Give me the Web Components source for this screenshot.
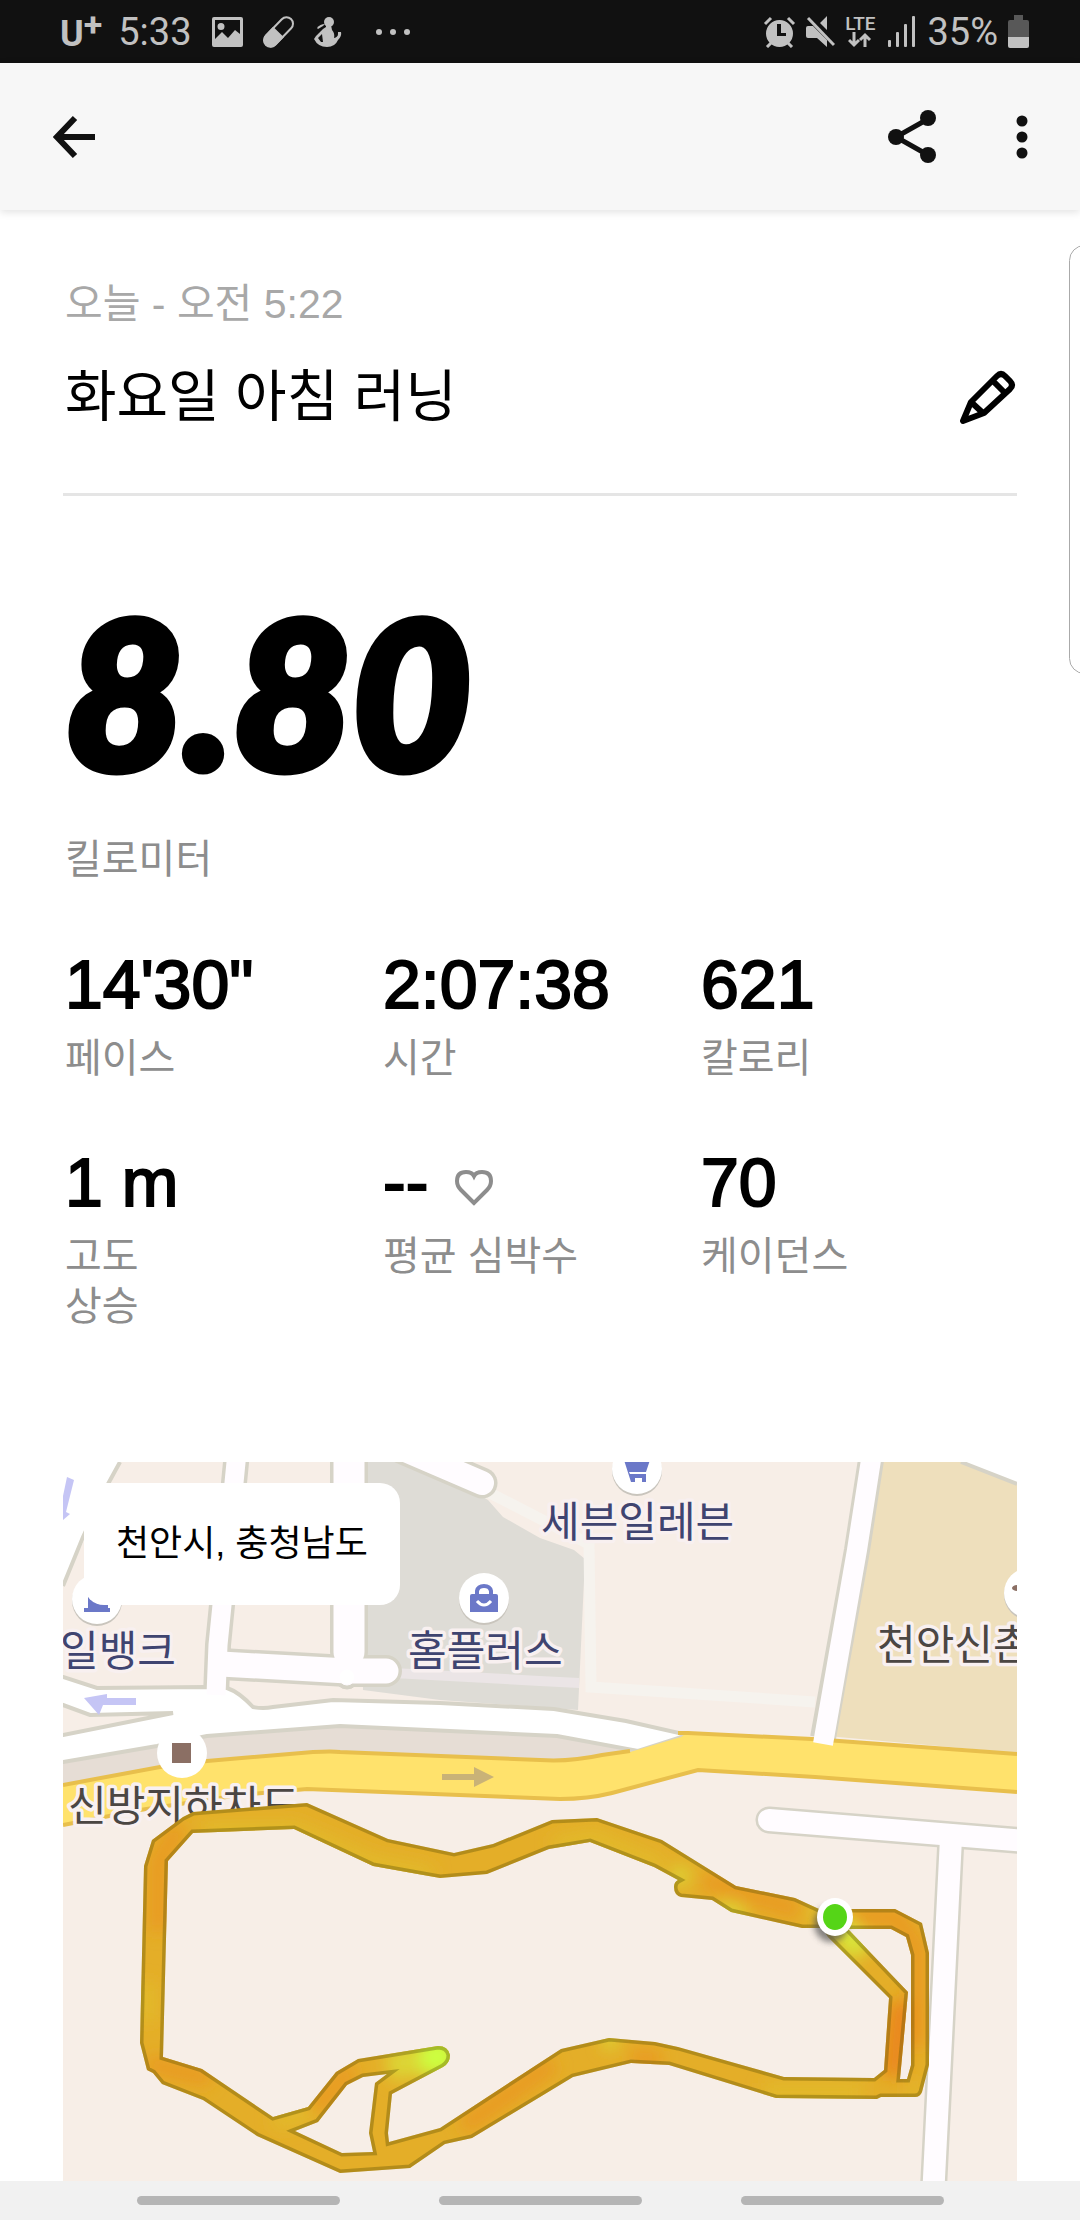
<!DOCTYPE html>
<html lang="ko">
<head>
<meta charset="utf-8">
<meta name="viewport" content="width=device-width, initial-scale=1">
<title>화요일 아침 러닝</title>
<style>
  body {
    margin: 0;
    background: #fff;
    color: #000;
    font-family: "Liberation Sans", "Noto Sans CJK KR", sans-serif;
  }
</style>
</head>
<body>
<run-page>
  <status-bar slot="top" time="5:33" battery="35%"></status-bar>
  <app-bar slot="top"></app-bar>

  <run-header date="오늘 - 오전 5:22">화요일 아침 러닝</run-header>
  <run-distance value="8.80">킬로미터</run-distance>
  <stat-grid>
    <run-stat value="14'30&quot;">페이스</run-stat>
    <run-stat value="2:07:38">시간</run-stat>
    <run-stat value="621">칼로리</run-stat>
    <run-stat value="1 m">고도<br>상승</run-stat>
    <run-stat value="--" heart>평균 심박수</run-stat>
    <run-stat value="70">케이던스</run-stat>
  </stat-grid>
  <route-map>천안시, 충청남도</route-map>

  <nav-bar slot="bottom"></nav-bar>
</run-page>

<script>
class RunPage extends HTMLElement {
    constructor(){
        super();
        this.attachShadow({mode: 'open'}).innerHTML = `
        <style>
        :host {
          display: flex;
          flex-direction: column;
          min-height: 100vh;
          position: relative;
          overflow: hidden;
        }
        main {
          flex: 1;
          padding: 0 63px;
        }
        /* edge panel that peeks in from the right */
        .edge {
          position: absolute;
          top: 245px;
          right: -20px;
          width: 29px;
          height: 427px;
          border: 1px solid #aaa;
          border-radius: 18px;
          background: #fff;
        }
        </style>
        <slot name="top"></slot>
        <main><slot></slot></main>
        <slot name="bottom"></slot>
        <div class="edge"></div>
        `;
    }
}

class StatusBar extends HTMLElement {
    constructor(){
        super();
        this.attachShadow({mode: 'open'});
    }

    connectedCallback(){
        this.shadowRoot.innerHTML = `
        <style>
        :host {
          display: flex;
          justify-content: space-between;
          height: 63px;
          padding: 0 51px 0 60px;
          background: #111;
          color: #c1c1c1;
          font: 38px/64px Roboto, sans-serif;
        }
        div {
          display: flex;
          align-items: center;
        }
        .left { gap: 20px; }
        .right { gap: 10px; }
        svg {
          display: block;
          fill: currentColor;
        }
        .carrier {
          display: flex;
          margin-right: -4px;
          padding-top: 4px;
          font: bold 36px/40px Roboto, sans-serif;
        }
        .carrier sup {
          font-size: 34px;
          line-height: 20px;
        }
        .net {
          flex-direction: column;
          font: 500 19px/16px Roboto, sans-serif;
        }
        </style>
        <div class="left">
          <span class="carrier">U<sup>+</sup></span>
          <span class="time">${this.getAttribute('time')}</span>
          <svg width="31" height="30" viewBox="0 0 31 30"><path fill-rule="evenodd" d="M2 0h27q2 0 2 2v26q0 2-2 2H2q-2 0-2-2V2q0-2 2-2zM3 3v19l7-7 6 6 7-8 5 4V3zM9 6a3.500 3.500 0 1 1 0 7 3.500 3.500 0 0 1 0-7z"/></svg>
          <svg width="31" height="32" viewBox="0 0 31 32"><g transform="rotate(44 15.500 16)"><rect x="9" y="-2" width="13" height="36" rx="6.500" fill="none" stroke="currentColor" stroke-width="2"/><path d="M8 16h15v11a7.500 7.500 0 0 1-15 0z"/></g></svg>
          <svg width="28" height="30" viewBox="0 0 28 30"><circle cx="15" cy="5" r="5"/><path d="M12 8h5l1 5q3 3 2 8 4-1 4-4v-2h3q1 4-3 8-3 7-11 7-9 0-13-8l2-3 7-7 3-2zM4 21l3 4 2 0-1-8z" fill-rule="evenodd"/><path d="M3 11q3-4 8-4l-2 2-5 3z"/></svg>
          <svg width="54" height="8" viewBox="0 0 54 8"><circle cx="17" cy="4" r="3"/><circle cx="31" cy="4" r="3"/><circle cx="45" cy="4" r="3"/></svg>
        </div>
        <div class="right">
          <svg width="33" height="32" viewBox="0 0 33 32"><path fill-rule="evenodd" d="M16.500 4a13.500 13.500 0 1 1 0 27 13.500 13.500 0 0 1 0-27zM14 8v12h9v-3h-5V8z"/><path d="M2 8l6-6M31 8l-6-6M4 31l5-5M29 31l-5-5" stroke="currentColor" stroke-width="3"/></svg>
          <svg width="29" height="32" viewBox="0 0 29 32"><path d="M21 0v14l-7-7zM2 10h5l14 14v7l-10-9H2q-2 0-2-2v-8q0-2 2-2z"/><path d="M2 2l26 27" stroke="currentColor" stroke-width="3"/></svg>
          <div class="net">LTE
            <svg width="24" height="16" viewBox="0 0 24 16" fill="none" stroke="currentColor" stroke-width="3"><path fill="none" d="M6 0v13M1 8l5 5 5-5M17 15V3M12 8l5-5 5 5"/></svg>
          </div>
          <svg width="32" height="32" viewBox="0 0 32 32"><rect x="3" y="24" width="3" height="7" rx="1"/><rect x="11" y="16" width="3" height="15" rx="1"/><rect x="19" y="8" width="3" height="23" rx="1"/><rect x="27" y="0" width="3" height="31" rx="1"/></svg>
          <span>${this.getAttribute('battery')}</span>
          <svg width="21" height="33" viewBox="0 0 21 33"><path fill="#585858" d="M6 0h9v5h4q2 0 2 2v15H0V7q0-2 2-2h4z"/><path d="M0 22h21v9q0 2-2 2H2q-2 0-2-2z"/></svg>
        </div>
        `;
    }
}

class AppBar extends HTMLElement {
    constructor(){
        super();
        this.attachShadow({mode: 'open'}).innerHTML = `
        <style>
        :host {
          display: flex;
          align-items: center;
          height: 147px;
          padding: 0 40px;
          background: #f7f7f7;
          box-shadow: 0 2px 8px rgba(0, 0, 0, .12);
          color: #111;
        }
        button {
          display: flex;
          justify-content: center;
          width: 68px;
          padding: 0;
          border: 0;
          background: none;
          color: inherit;
        }
        .back { margin-right: auto; }
        .share { margin-right: 58px; }
        .more { width: 36px; }
        </style>
        <button class="back" aria-label="뒤로"><svg width="42" height="44" viewBox="0 0 42 44" fill="none" stroke="currentColor" stroke-width="6"><path d="M22 3L4 22l18 19M4 22h38"/></svg></button>
        <button class="share" aria-label="공유"><svg width="48" height="54" viewBox="0 0 48 54" fill="currentColor"><path d="M40 9L8 27l32 18" fill="none" stroke="currentColor" stroke-width="5"/><circle cx="40" cy="8" r="8"/><circle cx="8" cy="27" r="8"/><circle cx="40" cy="45" r="8"/></svg></button>
        <button class="more" aria-label="더보기"><svg width="12" height="44" viewBox="0 0 12 44" fill="currentColor"><circle cx="6" cy="6" r="5.500"/><circle cx="6" cy="22" r="5.500"/><circle cx="6" cy="38" r="5.500"/></svg></button>
        `;
    }
}

class RunHeader extends HTMLElement {
    constructor(){
        super();
        this.attachShadow({mode: 'open'});
    }

    connectedCallback(){
        this.shadowRoot.innerHTML = `
        <style>
        :host {
          display: block;
          padding: 70px 0 60px;
          border-bottom: 3px solid #e5e5e5;
        }
        time {
          display: block;
          padding-left: 2px;
          color: #a8a8a8;
          font-size: 41px;
          line-height: 48px;
        }
        div {
          display: flex;
          align-items: center;
          justify-content: space-between;
          margin-top: 33px;
          padding-left: 2px;
        }
        h1 {
          margin: 0;
          font-size: 56px;
          font-weight: 400;
          line-height: 72px;
        }
        button {
          padding: 0;
          border: 0;
          background: none;
          color: inherit;
        }
        svg { display: block; }
        </style>
        <time>${this.getAttribute('date')}</time>
        <div>
          <h1><slot></slot></h1>
          <button aria-label="수정"><svg width="58" height="56" viewBox="0 0 58 56" fill="none" stroke="currentColor" stroke-width="6" stroke-linejoin="round"><path d="M4 52L12 33 38 7q4-4 8 0l5 5q4 4 0 8L25 44zM12 33l12 11M34 12l12 12"/></svg></button>
        </div>
        `;
    }
}

class RunDistance extends HTMLElement {
    constructor(){
        super();
        this.attachShadow({mode: 'open'});
    }

    connectedCallback(){
        this.shadowRoot.innerHTML = `
        <style>
        :host {
          display: block;
          padding: 94px 0 0 2px;
        }
        strong {
          display: block;
          font: italic 900 205px/200px Lato, sans-serif;
          -webkit-text-stroke: 9px #000;
        }
        span {
          display: block;
          margin-top: 44px;
          color: #8d8d8d;
          font-size: 40px;
          line-height: 50px;
        }
        </style>
        <strong>${this.getAttribute('value')}</strong>
        <span><slot></slot></span>
        `;
    }
}

class StatGrid extends HTMLElement {
    constructor(){
        super();
        this.attachShadow({mode: 'open'}).innerHTML = `
        <style>
        :host {
          display: grid;
          grid-template-columns: repeat(3, 1fr);
          row-gap: 59px;
          padding: 60px 0 131px;
        }
        </style>
        <slot></slot>
        `;
    }
}

class RunStat extends HTMLElement {
    constructor(){
        super();
        this.attachShadow({mode: 'open'});
    }

    connectedCallback(){
        const heart = this.hasAttribute('heart')
            ? '<svg width="38" height="36" viewBox="0 0 38 36" fill="none" stroke="#8d8d8d" stroke-width="4"><path d="M19 33L6 20Q2 16 2 11 2 2 11 2q6 0 8 4 2-4 8-4 9 0 9 9 0 5-4 9z"/></svg>'
            : '';
        this.shadowRoot.innerHTML = `
        <style>
        :host {
          display: block;
          padding-left: 2px;
        }
        b {
          font-size: 68px;
          font-weight: 400;
          line-height: 80px;
          -webkit-text-stroke: 2px #000;
        }
        svg { margin-left: 27px; }
        span {
          display: block;
          margin-top: 9px;
          color: #8d8d8d;
          font-size: 40px;
          line-height: 50px;
        }
        </style>
        <b>${this.getAttribute('value')}</b>${heart}
        <span><slot></slot></span>
        `;
    }
}

class RouteMap extends HTMLElement {
    constructor(){
        super();
        this.attachShadow({mode: 'open'}).innerHTML = `
        <style>
        :host {
          display: block;
          position: relative;
        }
        svg {
          display: block;
          width: 100%;
          height: auto;
          background: #f7eee7;
        }
        .chip {
          position: absolute;
          top: 21px;
          left: 21px;
          padding: 34px 32px;
          border-radius: 20px;
          background: #fff;
          font-size: 36px;
          line-height: 54px;
        }
        .edge { stroke: #d6d3c7; fill: none; }
        .road { stroke: #fffcff; fill: none; }
        text {
          font: 400 42px "Noto Sans CJK KR", sans-serif;
          fill: #3f4470;
          stroke: #f8f0f0;
          stroke-width: 7px;
          stroke-linejoin: round;
          paint-order: stroke;
        }
        .dark { fill: #4b4643; }
        </style>
        <svg viewBox="0 0 954 719" role="img" aria-label="러닝 경로">
          <defs>
            <path id="track" clip-rule="evenodd" d="
              M489 358L430 382 391 391 325 377 244 341 130 350 120 355 89 378 81 404 77 581 84 608 90 611 99 622 140 638 194 674 277 711 347 706 382 682 409 676 477 635 510 615 568 601 606 603 713 636 814 637 818 635 852 635Q857 635 859 630L866 603V491L859 461 832 447H756L732 436 673 424 599 378 534 356z
              M759 466H739L690 455 668 450 649 438 618 435Q611 433 611 425 611 420 615 418L591 405 527 380 486 387 424 412 377 416 310 404 231 367 130 371 105 399 100 595 139 607 210 655 245 645 273 610 295 597 375 584Q385 584 387 593 387 601 380 605L329 632 325 671 326 680 377 666 498 587 546 576 592 580 615 585 721 615 811 616 821 608 826 536 765 475z
              M232 669L255 660 284 623 300 615 324 612 312 621 306 671 310 690 279 691z
              M787 467H828L843 475 848 493V603L844 617H837L845 530 785 467z"/>
            <clipPath id="inside"><use href="#track"/></clipPath>
            <filter id="soft" x="-50%" y="-50%" width="200%" height="200%"><feGaussianBlur stdDeviation="8"/></filter>
            <filter id="shade" x="-50%" y="-50%" width="200%" height="200%"><feGaussianBlur stdDeviation="3"/></filter>
          </defs>

          <!-- blocks -->
          <path fill="#dedcd6" d="M300 0h60l65 38 15 17 37 21 34 12 11 9-7 151-38-3-100-7-77-10z"/>
          <path fill="#ebe5e6" d="M330 206l147 8 39 2v10l-39-2-147-8z"/>
          <path fill="none" stroke="#f6f3ee" stroke-width="11" d="M425 30l101 52 2 143 224 15"/>
          <path fill="#eedfbc" d="M808 0h146v291l-179-16-15-2z"/>
          <path fill="#e6ddd5" d="M0 301l94-16 50-10 133-10 217 10 79 15-70 14-250-9-253 34z"/>

          <!-- side streets -->
          <path fill="#fff" d="M0 0h57L0 124z"/>
          <path class="edge" stroke-width="4" d="M57 0L45 22 20 75 0 124"/>
          <path fill="#fff" d="M898 0h56v22z"/>
          <path class="edge" stroke-width="4" d="M898 0l56 22"/>
          <g class="edge" stroke-linecap="round">
            <path stroke-width="26" d="M175-20L159 143l-4 40-2 50" stroke-linecap="butt"/>
            <path stroke-width="38" d="M286-30v220"/>
            <path stroke-width="32" d="M158 202l126 7h39"/>
            <circle cx="284" cy="215" r="12" fill="#d6d3c7"/>
            <path stroke-width="31" d="M340-13l79 34"/>
            <path stroke-width="26" d="M810-15L794 88l-34 188" stroke-linecap="butt"/>
            <path stroke-width="27" d="M706 358l270 22M888 376l-18 360"/>
          </g>

          <!-- main white road -->
          <path fill="#fff" stroke="#d6d3c7" stroke-width="4" d="M-10 212l10 3 34 11 108-1 22 1q12 4 26 19 10 2 20 0l60-7 107 3 114 6 72 12 62 14-50 16-81-15-217-10-133 10-50 10-94 16-10 2z"/>
          <path fill="#f7eee7" stroke="#d6d3c7" stroke-width="4" d="M-10 238l10 5 27 10 83-2-110 22-10 2z"/>
          <g class="road" stroke-linecap="round">
            <path stroke-width="19" d="M175-20L159 143l-4 40-2 50" stroke-linecap="butt"/>
            <path stroke-width="31" d="M286-30v220"/>
            <path stroke-width="25" d="M158 202l126 7h39"/>
            <circle cx="284" cy="215" r="8" fill="#fff"/>
            <path stroke-width="24" d="M340-13l79 34"/>
            <path stroke-width="22" d="M706 358l270 22M888 376l-18 360"/>
          </g>

          <!-- highway -->
          <path fill="#ffe26c" d="M0 323l97-18 47-6 106-9 248 9 41-6 28-3 51-15 7-5 124 6 205 15v39l-202-15-117-7-86 23q-30 8-52 6l-253-10-67 6-100 15-77 15z"/>
          <g fill="none" stroke="#e8bf4c" stroke-width="4">
            <path d="M0 323l97-18 47-6 106-9q20-1 27 0l200 8q30 2 62-5l28-4M615 271h10l124 6 205 15"/>
            <path d="M0 363l77-15 100-15 67-6 253 10q28 0 52-6l86-23 117 7 202 15"/>
          </g>
          <path class="road" stroke-width="20" d="M810-15L794 88l-34 194"/>
          <path fill="#c5c5f5" d="M21 236l23-4v4h29v7H40l-4 10zM4 15l7 3L3 50l4 2-7 6V34z"/>
          <path fill="#c9b277" d="M379 312h32v-7l20 10-20 10v-7h-32z"/>

          <!-- places -->
          <g fill="#c9c5bd"><circle cx="574" cy="9" r="25"/><circle cx="421" cy="138" r="25"/><circle cx="34" cy="139" r="25"/><circle cx="966" cy="133" r="25"/></g>
          <g fill="#fff"><circle cx="574" cy="7" r="25"/><circle cx="421" cy="136" r="25"/><circle cx="34" cy="137" r="25"/><circle cx="119" cy="291" r="25"/><circle cx="966" cy="131" r="25"/></g>
          <g fill="#6b78c8">
            <path d="M561-2h26l-4 12h-17l1 2h16v8h-4v-4h-7v4h-4z"/>
            <path d="M409 132h24q2 0 2 2v16h-28v-16q0-2 2-2z"/>
            <path d="M21 146h4v-14h20v14h2v4H21z"/>
          </g>
          <path fill="none" stroke="#6b78c8" stroke-width="4" d="M414 133v-4q1-5 7-5t7 5v4"/>
          <path fill="none" stroke="#fff" stroke-width="3" d="M414 139q7 8 14 0"/>
          <path fill="#8b6f64" d="M109 281h19v20h-19z"/>
          <ellipse cx="954" cy="126" rx="5" ry="3" fill="#8b6f64"/>

          <text x="478" y="75">세븐일레븐</text>
          <text x="345" y="204">홈플러스</text>
          <text x="-3" y="204">일뱅크</text>
          <text class="dark" x="5" y="359">신방지하차도</text>
          <text class="dark" x="814" y="198">천안신촌</text>

          <!-- track, tinted by pace -->
          <g clip-path="url(#inside)">
            <rect y="330" width="954" height="389" fill="#e4ae28"/>
            <g filter="url(#soft)" fill="none" stroke-width="18">
              <path stroke="#e99a22" d="M95 470V400l22-36M84 600l24 8 40 8M250 648l40-42M400 665l90-64M640 418l95 30M780 455h54l20 30v100M568 596l30 2"/>
              <path stroke="#ea861b" stroke-width="22" d="M838 540l-8 74"/>
              <path stroke="#e2ba2b" d="M140 368h90l80 34 60 12M490 384l40-8 70 30M84 560v-40M210 660l40-10M700 630h100M845 628h10"/>
              <path stroke="#dcd636" d="M540 578h14M655 446l26 8M750 452h8M610 410l15 8"/>
              <path stroke="#d8e63a" stroke-width="26" d="M775 462l25 28"/>
              <path stroke="#dcd636" stroke-width="30" d="M325 604l40-8"/>
              <path stroke="#ccff40" stroke-width="36" d="M358 596l34-3"/>
            </g>
            <use href="#track" fill="none" stroke="#504800" stroke-opacity=".33" stroke-width="7"/>
          </g>
          <ellipse cx="768" cy="462" rx="17" ry="18" fill="#555" opacity=".7" filter="url(#shade)"/>
          <ellipse cx="772" cy="455" rx="18" ry="19" fill="#fff"/>
          <ellipse cx="772" cy="455" rx="12" ry="13" fill="#55d517"/>
        </svg>
        <div class="chip"><slot></slot></div>
        `;
    }
}

class NavBar extends HTMLElement {
    constructor(){
        super();
        this.attachShadow({mode: 'open'}).innerHTML = `
        <style>
        :host {
          display: flex;
          align-items: center;
          justify-content: center;
          gap: 99px;
          height: 39px;
          background: #f1f1f1;
        }
        button {
          width: 203px;
          height: 9px;
          padding: 0;
          border: 0;
          border-radius: 5px;
          background: #b5b5b5;
        }
        </style>
        <button aria-label="최근 앱"></button>
        <button aria-label="홈"></button>
        <button aria-label="뒤로"></button>
        `;
    }
}

customElements.define('run-page', RunPage);
customElements.define('status-bar', StatusBar);
customElements.define('app-bar', AppBar);
customElements.define('run-header', RunHeader);
customElements.define('run-distance', RunDistance);
customElements.define('stat-grid', StatGrid);
customElements.define('run-stat', RunStat);
customElements.define('route-map', RouteMap);
customElements.define('nav-bar', NavBar);
</script>
</body>
</html>
